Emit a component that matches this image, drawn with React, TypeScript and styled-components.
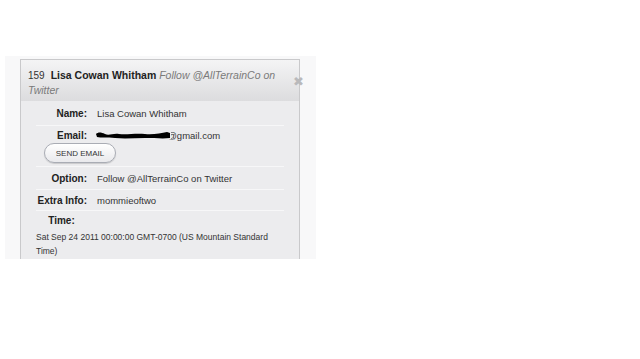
import { FC } from "react";
import styled, { createGlobalStyle } from "styled-components";

const Global = createGlobalStyle`
  body {
    margin: 0;
    background: #ffffff;
    font-family: "Liberation Sans", Arial, sans-serif;
  }
`;

const Page = styled.div`
  padding: 56px 0 0 5px;
`;

const Frame = styled.div`
  width: 296px;
  height: 200px;
  padding: 3px 0 0 15px;
  background: #f8f8f9;
  overflow: hidden;
`;

const Card = styled.div`
  position: relative;
  width: 278px;
  height: 220px;
  border: 1px solid #c9c9cb;
  background: #ececee;
`;

const Header = styled.div`
  height: 41px;
  box-sizing: border-box;
  padding: 8px 12px 0 7px;
  background: linear-gradient(#f4f4f5, #dcdcde);
  font-size: 10.5px;
  line-height: 14px;
  color: #333;

  .num {
    font-size: 10px;
    margin-right: 6px;
  }

  .who {
    font-weight: bold;
    color: #222;
  }

  .opt {
    font-style: italic;
    color: #7a7a7a;
  }
`;

const Close = styled.span`
  position: absolute;
  top: 14px;
  right: -5px;
  font-size: 13px;
  color: #b9b9bb;
`;

const Body = styled.div`
  padding: 0 15px 0 15px;
  font-size: 9.5px;
  color: #333;
`;

const Row = styled.div<{ $h: number }>`
  display: flex;
  align-items: center;
  height: ${(p) => p.$h}px;
  border-bottom: 1px solid #f7f7f8;
`;

const Label = styled.div<{ $center?: boolean }>`
  width: 51px;
  flex: none;
  white-space: nowrap;
  text-align: ${(p) => (p.$center ? "center" : "right")};
  font-weight: bold;
  font-size: 10px;
  color: #222;
`;

const Value = styled.div`
  margin-left: 10px;
  white-space: nowrap;
`;

const EmailBlock = styled.div`
  padding: 3px 0 3px 0;
  border-bottom: 1px solid #f7f7f8;
`;

const EmailLine = styled.div`
  display: flex;
  align-items: center;
  height: 13px;
  position: relative;
`;

const Redact = styled.svg`
  position: absolute;
  left: 59px;
  top: 1px;
`;

const SendButton = styled.button`
  display: block;
  margin: 1px 0 0 8px;
  width: 72px;
  height: 20px;
  border: 1px solid #a9acb4;
  border-radius: 10px;
  background: linear-gradient(#ffffff, #e9e9ec);
  box-shadow: 0 1px 1px rgba(0, 0, 0, 0.15);
  font-family: inherit;
  font-size: 8px;
  color: #333;
  padding: 0;
`;

const TimeBlock = styled.div`
  padding-top: 3px;
  line-height: 14px;
`;

const TimeText = styled.div`
  margin-top: 2px;
  font-size: 8.5px;
  line-height: 14px;
`;

const App: FC = () => {
  return (
    <>
      <Global />
      <Page>
        <Frame>
          <Card>
            <Header>
              <span className="num">159</span>
              <span className="who">Lisa Cowan Whitham</span>{" "}
              <span className="opt">Follow @AllTerrainCo on Twitter</span>
            </Header>
            <Close>✖</Close>
            <Body>
              <Row $h={24}>
                <Label>Name:</Label>
                <Value>Lisa Cowan Whitham</Value>
              </Row>
              <EmailBlock>
                <EmailLine>
                  <Label>Email:</Label>
                  <Value>redactedxxxxxxx@gmail.com</Value>
                  <Redact width="76" height="9" viewBox="0 0 76 9">
                    <rect x="0" y="0" width="76" height="9" fill="#ececee" />
                    <path
                      d="M1 4 C3 2 6 2 10 4 C14 6 18 3 24 4 C32 5 40 3 50 4 C58 5 66 3 72 2 L75 3 L75 8 C68 9 60 8 50 8 C40 8 30 9 20 8 C12 7 6 8 2 7 Z"
                      fill="#000"
                    />
                  </Redact>
                </EmailLine>
                <SendButton>SEND EMAIL</SendButton>
              </EmailBlock>
              <Row $h={22}>
                <Label>Option:</Label>
                <Value>Follow @AllTerrainCo on Twitter</Value>
              </Row>
              <Row $h={20}>
                <Label>Extra Info:</Label>
                <Value>mommieoftwo</Value>
              </Row>
              <TimeBlock>
                <Label $center>Time:</Label>
                <TimeText>
                  Sat Sep 24 2011 00:00:00 GMT-0700 (US Mountain Standard Time)
                </TimeText>
              </TimeBlock>
            </Body>
          </Card>
        </Frame>
      </Page>
    </>
  );
};

export default App;
